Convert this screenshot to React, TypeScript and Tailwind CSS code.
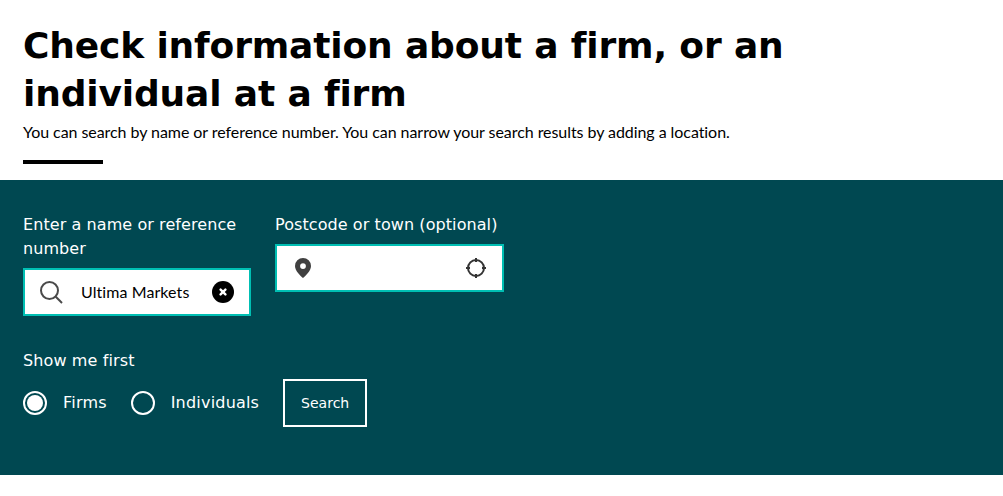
import { useState } from "react";

const verdana = "font-['DejaVu_Sans',sans-serif]";

function Field({
  label,
  className,
  children,
}: {
  label: string;
  className: string;
  children: React.ReactNode;
}) {
  return (
    <div className={className}>
      <label className={`block text-base leading-6 tracking-[0.08px] text-white ${verdana}`}>{label}</label>
      <div className="mt-[7px] flex h-12 items-center border-2 border-[#00bfb3] bg-white">
        {children}
      </div>
    </div>
  );
}

function Radio({ label, checked }: { label: string; checked?: boolean }) {
  return (
    <label className="flex items-center gap-4">
      <span className="flex h-6 w-6 items-center justify-center rounded-full border-2 border-white">
        {checked && <span className="h-4 w-4 rounded-full bg-white" />}
      </span>
      <span className={`text-base leading-6 tracking-[0.2px] text-white ${verdana}`}>{label}</span>
    </label>
  );
}

export default function App() {
  const [name] = useState("Ultima Markets");

  return (
    <div className="h-[496px] bg-white font-['Lato',sans-serif] text-black [font-variant-ligatures:none]">
      <div className="px-[23px] pt-[22px]">
        <h1 className={`w-[800px] text-[36px] font-bold leading-[48px] tracking-[-0.15px] ${verdana}`}>
          Check information about a firm, or an individual at a firm
        </h1>
        <p className="mt-[2px] text-base leading-6 tracking-[-0.06px]">
          You can search by name or reference number. You can narrow your search results by adding a location.
        </p>
        <div className="mt-4 h-1 w-20 bg-black" />
      </div>

      <form className="mt-4 h-[295px] bg-[#004851] px-[23px] pt-[33px]">
        <div className="flex items-start gap-[24px]">
          <Field label="Enter a name or reference number" className="w-[228px]">
            <svg viewBox="0 0 24 24" className="ml-[14px] h-[24px] w-[24px] shrink-0" fill="none" stroke="#4a4a4a" strokeWidth="2">
              <circle cx="10.5" cy="10.5" r="8.500" />
              <path d="M16.800 16.800 23 23" />
            </svg>
            <span className="ml-[18px] flex-1 text-base tracking-[0.08px] text-black">{name}</span>
            <span className="mr-[15px] flex h-[22px] w-[22px] shrink-0 items-center justify-center rounded-full bg-black">
              <svg viewBox="0 0 10 10" className="h-2 w-2" fill="none" stroke="white" strokeWidth="3" strokeLinecap="round">
                <path d="M2 2 8 8M8 2 2 8" />
              </svg>
            </span>
          </Field>
          <Field label="Postcode or town (optional)" className="w-[229px]">
            <svg viewBox="0 0 16 20" className="ml-[18px] h-[20px] w-4 shrink-0" fill="#404040">
              <path fillRule="evenodd" d="M8 0a8 8 0 0 0-8 8c0 4.600 5 9.400 8 12 3-2.600 8-7.400 8-12a8 8 0 0 0-8-8Zm0 5.200a2.900 2.900 0 1 1 0 5.800 2.900 2.900 0 0 1 0-5.800Z" />
            </svg>
            <span className="flex-1" />
            <svg viewBox="0 0 20 20" className="mr-[16px] h-5 w-5 shrink-0" fill="none" stroke="#333" strokeWidth="2">
              <circle cx="10" cy="10" r="8" />
              <path d="M10 0v4M10 16v4M0 10h4M16 10h4" />
            </svg>
          </Field>
        </div>

        <p className={`mt-[33px] text-base leading-6 tracking-[0.12px] text-white ${verdana}`}>Show me first</p>
        <div className="mt-[6px] flex items-center">
          <Radio label="Firms" checked />
          <div className="ml-6">
            <Radio label="Individuals" />
          </div>
          <button type="button" className={`ml-6 h-12 w-[84px] border-2 border-white text-sm text-white ${verdana}`}>
            Search
          </button>
        </div>
      </form>
    </div>
  );
}
